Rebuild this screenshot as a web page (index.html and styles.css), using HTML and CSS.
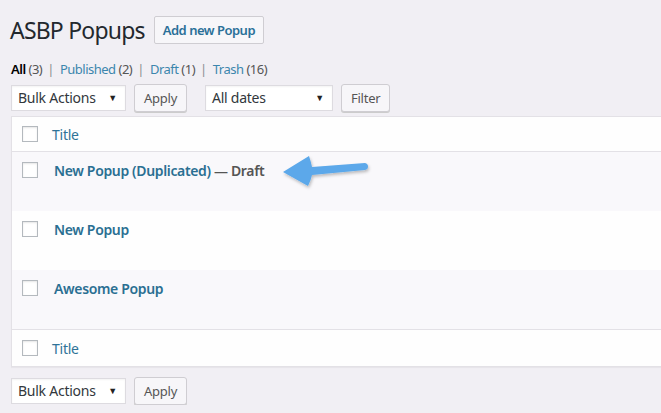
FILE: index.html
```html
<!DOCTYPE html>
<html lang="en">
<head>
  <meta charset="UTF-8">
  <title>ASBP Popups</title>
  <link rel="stylesheet" href="styles.css">
</head>
<body>
<div class="wrap">
  <div class="page-head">
    <h1>ASBP Popups</h1>
    <a class="add-btn" href="#">Add new Popup</a>
  </div>

  <ul class="subsubsub">
    <li><a class="current" href="#">All <span class="count">(3)</span></a><span class="sep">|</span></li>
    <li><a href="#">Published <span class="count">(2)</span></a><span class="sep">|</span></li>
    <li><a href="#">Draft <span class="count">(1)</span></a><span class="sep">|</span></li>
    <li><a href="#">Trash <span class="count">(16)</span></a></li>
  </ul>

  <div class="tablenav">
    <div class="select bulk">Bulk Actions</div>
    <button class="btn apply">Apply</button>
    <div class="select dates">All dates</div>
    <button class="btn">Filter</button>
  </div>

  <div class="list">
    <div class="row head"><span class="cb"></span><a href="#">Title</a></div>
    <div class="row item alt">
      <span class="cb"></span>
      <strong><a href="#">New Popup (Duplicated)</a> — <span class="state">Draft</span></strong>
      <svg class="arrow" width="96" height="40" viewBox="0 0 96 40">
        <defs>
          <filter id="sh" x="-20%" y="-40%" width="140%" height="180%">
            <feDropShadow dx="1" dy="2" stdDeviation="1.5" flood-color="#000" flood-opacity="0.25"/>
          </filter>
        </defs>
        <path filter="url(#sh)" fill="#5ba8ea" d="M2 21 L28 5 Q30 11 31 16 L84 12 Q87 12.5 87 15.5 Q87 18.5 84 19 L31 24 Q30 29 27 35 Z"/>
      </svg>
    </div>
    <div class="row item"><span class="cb"></span><strong><a href="#">New Popup</a></strong></div>
    <div class="row item alt"><span class="cb"></span><strong><a href="#">Awesome Popup</a></strong></div>
    <div class="row head foot"><span class="cb"></span><a href="#">Title</a></div>
  </div>

  <div class="tablenav bottom">
    <div class="select bulk">Bulk Actions</div>
    <button class="btn apply">Apply</button>
  </div>
</div>
</body>
</html>
```

FILE: styles.css
```css
* { box-sizing: border-box; }
html, body { overflow: hidden; }
body { margin:0; background:#f1eff4; font-family:"Noto Sans", "Open Sans", Arial, sans-serif; font-size:13px; color:#32373c; letter-spacing:-0.25px; }
a { color:#2a7098; text-decoration:none; }
.wrap { padding:14px 0 0 11px; }

.page-head { display:flex; align-items:center; gap:9px; }
h1 { margin:0 0 0 -1px; font-size:23px; font-weight:400; color:#23282d; line-height:32px; letter-spacing:-0.8px; }
.add-btn { border:1px solid #cfcdd2; background:#f7f6f9; border-radius:2px; padding:0 8px; height:28px; line-height:26px; font-size:13px; font-weight:600; color:#2a7098; letter-spacing:-0.5px; }

.subsubsub { list-style:none; margin:14px 0 0; padding:0; display:flex; font-size:13px; color:#72777c; line-height:18px; letter-spacing:-0.5px; }
.subsubsub li { white-space:nowrap; }
.subsubsub a { color:#3c86ad; }
.subsubsub a.current { color:#000; font-weight:600; }
.sep { margin:0 6px 0 5px; color:#8a8d91; }
.count { color:#555; font-weight:400; }

.tablenav { display:flex; align-items:center; margin-top:6px; height:28px; }
.select { position:relative; height:26px; line-height:24px; border:1px solid #dddbe0; background:#fff; padding:0 0 0 6px; font-size:14px; color:#32373c; box-shadow:inset 0 1px 2px rgba(0,0,0,.05); }
.select::after { content:"▼"; position:absolute; right:8px; top:0; font-size:9px; color:#222; }
.select.bulk { width:115px; }
.select.dates { width:128px; margin-left:18px; }
.btn { height:28px; padding:0 9px; margin-left:8px; border:1px solid #cfcdd2; border-radius:3px; background:#f7f6f9; box-shadow:0 1px 0 #ccc; font-family:inherit; font-size:13px; color:#555; letter-spacing:-0.25px; }
.btn.apply { width:53px; padding:0; }

.list { margin-top:4px; background:#fefefe; border:1px solid #e3e1e6; border-right:0; box-shadow:0 1px 1px rgba(0,0,0,.04); }
.row { display:flex; align-items:flex-start; padding-left:10px; }
.row.head { height:35px; align-items:center; border-bottom:1px solid #e3e1e6; }
.row.head a { font-size:14px; color:#2f7398; margin-left:14px; }
.row.foot { border-bottom:0; border-top:1px solid #e3e1e6; height:37px; }
.cb { width:16px; height:16px; border:1px solid #b4b9be; background:#fff; box-shadow:inset 0 1px 2px rgba(0,0,0,.1); flex:none; }
.row.item { height:59px; padding-top:10px; position:relative; }
.row.item.alt { background:#f9f8fb; }
.row.item strong { margin-left:16px; font-size:14px; font-weight:600; line-height:17px; color:#555; letter-spacing:-0.35px; }
.row.item strong a { color:#2a6f92; }
.state { color:#555; }
.arrow { position:absolute; left:269px; top:-1px; }

.tablenav.bottom { margin-top:10px; }
```
